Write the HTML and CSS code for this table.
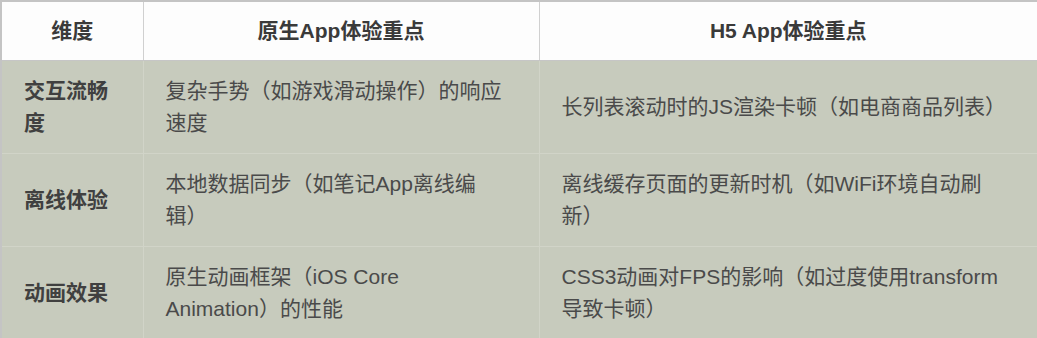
FILE: index.html
```html
<!DOCTYPE html>
<html lang="zh-CN">
<head>
<meta charset="utf-8">
<title>原生App与H5 App体验对比</title>
<link rel="stylesheet" href="styles.css">
</head>
<body>
<table class="cmp">
  <colgroup>
    <col class="c1">
    <col class="c2">
    <col class="c3">
  </colgroup>
  <thead>
    <tr>
      <th>维度</th>
      <th>原生App体验重点</th>
      <th>H5 App体验重点</th>
    </tr>
  </thead>
  <tbody>
    <tr>
      <td class="dim">交互流畅度</td>
      <td>复杂手势（如游戏滑动操作）的响应速度</td>
      <td>长列表滚动时的JS渲染卡顿（如电商商品列表）</td>
    </tr>
    <tr>
      <td class="dim">离线体验</td>
      <td>本地数据同步（如笔记App离线编辑）</td>
      <td>离线缓存页面的更新时机（如WiFi环境自动刷新）</td>
    </tr>
    <tr>
      <td class="dim">动画效果</td>
      <td>原生动画框架（iOS Core Animation）的性能</td>
      <td>CSS3动画对FPS的影响（如过度使用transform导致卡顿）</td>
    </tr>
  </tbody>
</table>
</body>
</html>
```
FILE: styles.css
```css
html, body {
  margin: 0;
  padding: 0;
  background: #ffffff;
}

.cmp {
  width: 1037px;
  table-layout: fixed;
  border-collapse: collapse;
  border: 2px solid #c4c4c4;
  font-family: "Liberation Sans", "Noto Sans CJK SC", sans-serif;
  font-size: 21px;
  line-height: 32px;
  text-spacing-trim: space-all;
}

.c1 { width: 142px; }
.c2 { width: 396px; }
.c3 { width: 499px; }

.cmp th {
  background: #fdfdfd;
  color: #3a3a3a;
  font-weight: bold;
  text-align: center;
  padding: 13px 22px;
  border: 1px solid #d0d0d0;
  border-bottom: 1px solid #c6c6c6;
}

.cmp td {
  background: #c7cbbd;
  color: #4a4a4a;
  text-align: left;
  vertical-align: middle;
  padding: 14px 30px 14px 22px;
  border: 1px solid #d1d4c8;
}

.cmp td.dim {
  font-weight: bold;
  color: #404040;
}
```
